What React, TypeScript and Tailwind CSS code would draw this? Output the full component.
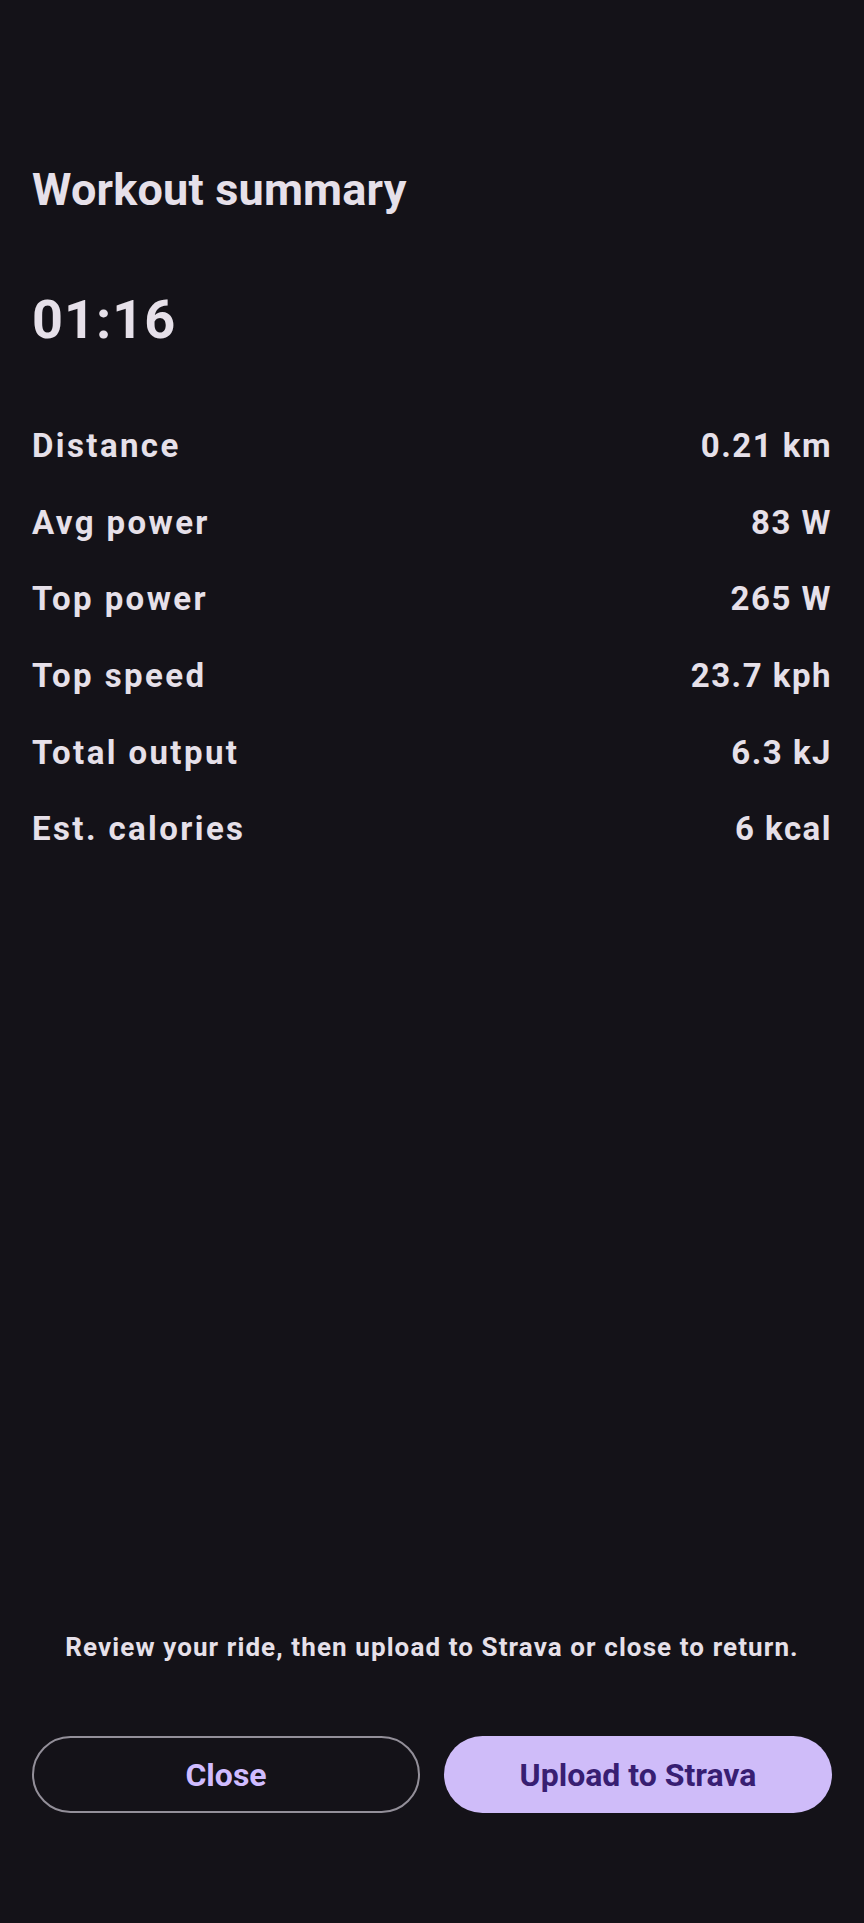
import React from "react";

const stats: [string, string][] = [
  ["Distance", "0.21 km"],
  ["Avg power", "83 W"],
  ["Top power", "265 W"],
  ["Top speed", "23.7 kph"],
  ["Total output", "6.3 kJ"],
  ["Est. calories", "6 kcal"],
];

export default function App() {
  return (
    <div
      className="flex h-[1923px] w-full flex-col bg-[#141218] px-8 text-[#e6e0e9]"
      style={{ fontFamily: "Roboto, 'Noto Sans', sans-serif" }}
    >
      <h1 className="mt-[162px] text-[45px] font-bold leading-[56px] tracking-[0.2px]">Workout summary</h1>
      <div className="mt-[70px] text-[54px] font-bold leading-[64px] tracking-[1px]">01:16</div>
      <div className="mt-[56px] flex flex-col">
        {stats.map(([label, value]) => (
          <div key={label} className="flex h-[76.6px] items-center justify-between">
            <span className="text-[33px] font-bold leading-[40px] tracking-[2.4px]">{label}</span>
            <span className="text-[33px] font-bold leading-[40px] tracking-[1.5px]">{value}</span>
          </div>
        ))}
      </div>
      <div className="mt-auto flex flex-col pb-[110px]">
        <p className="text-center text-[26px] font-bold leading-[32px] tracking-[1.1px]">
          Review your ride, then upload to Strava or close to return.
        </p>
        <div className="mt-[73px] grid grid-cols-2 gap-6">
          <button className="h-[77px] rounded-full border-2 border-[#938f99] text-[32px] font-bold text-[#d0bcff]">
            Close
          </button>
          <button className="h-[77px] rounded-full bg-[#cfbcf9] text-[32px] font-bold text-[#381e72]">
            Upload to Strava
          </button>
        </div>
      </div>
    </div>
  );
}
